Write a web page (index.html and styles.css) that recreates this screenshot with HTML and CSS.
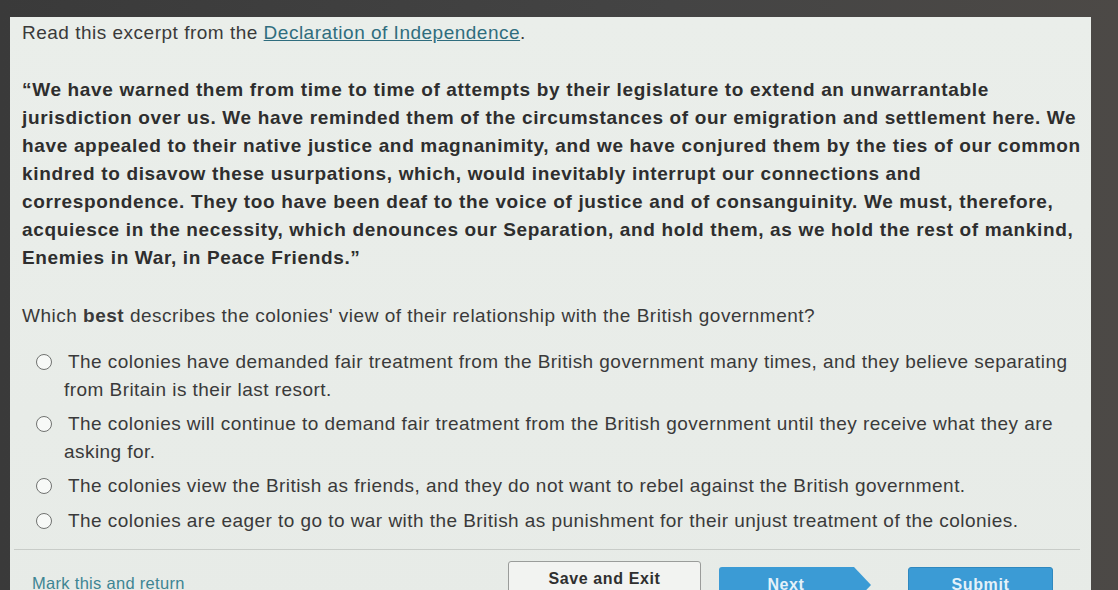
FILE: index.html
```html
<!DOCTYPE html>
<html>
<head>
<meta charset="utf-8">
<link rel="stylesheet" href="styles.css">
</head>
<body>
<div class="screen">
  <div class="content">
    <p class="intro">Read this excerpt from the <a class="link" href="#">Declaration of Independence</a>.</p>
    <p class="quote">“We have warned them from time to time of attempts by their legislature to extend an unwarrantable<br>jurisdiction over us. We have reminded them of the circumstances of our emigration and settlement here. We<br>have appealed to their native justice and magnanimity, and we have conjured them by the ties of our common<br>kindred to disavow these usurpations, which, would inevitably interrupt our connections and<br>correspondence. They too have been deaf to the voice of justice and of consanguinity. We must, therefore,<br>acquiesce in the necessity, which denounces our Separation, and hold them, as we hold the rest of mankind,<br>Enemies in War, in Peace Friends.”</p>
    <p class="question">Which <b>best</b> describes the colonies' view of their relationship with the British government?</p>
    <ul class="options">
      <li class="option"><span class="radio"></span><span class="otext">The colonies have demanded fair treatment from the British government many times, and they believe separating<br>from Britain is their last resort.</span></li>
      <li class="option"><span class="radio"></span><span class="otext">The colonies will continue to demand fair treatment from the British government until they receive what they are<br>asking for.</span></li>
      <li class="option"><span class="radio"></span><span class="otext">The colonies view the British as friends, and they do not want to rebel against the British government.</span></li>
      <li class="option"><span class="radio"></span><span class="otext">The colonies are eager to go to war with the British as punishment for their unjust treatment of the colonies.</span></li>
    </ul>
  </div>
  <div class="footer">
    <div class="markcell"><a class="mark" href="#">Mark this and return</a></div>
    <button class="btn save">Save and Exit</button>
    <button class="btn next">Next</button>
    <button class="btn submit">Submit</button>
  </div>
</div>
</body>
</html>
```

FILE: styles.css
```css
html, body {
  margin: 0;
  padding: 0;
  height: 100%;
  overflow: hidden;
}
body {
  background: linear-gradient(90deg, #3a3a3a 0%, #444444 60%, #4c4946 100%);
  font-family: "Liberation Sans", Arial, sans-serif;
  color: #333;
}
.screen {
  margin: 17px 0 0 10px;
  width: 1081px;
  height: 600px;
  background: linear-gradient(180deg, #eaeeea 0%, #e7ebe7 100%);
  display: flex;
  flex-direction: column;
}
.content {
  padding: 0 0 0 12px;
  white-space: nowrap;
}
.intro {
  margin: 4px 0 0;
  font-size: 19px;
  letter-spacing: 0.5px;
  line-height: 24px;
  color: #3a3a3a;
}
.link {
  color: #2f6d7e;
  text-decoration: underline;
}
.quote {
  margin: 31px 0 0;
  font-size: 19px;
  letter-spacing: 0.66px;
  font-weight: bold;
  line-height: 28px;
  color: #2e2e2e;
}
.question {
  margin: 32px 0 0;
  font-size: 19px;
  letter-spacing: 0.5px;
  line-height: 24px;
  color: #3a3a3a;
}
.options {
  list-style: none;
  margin: 20px 0 0;
  padding: 0 0 0 14px;
}
.option {
  display: flex;
  align-items: flex-start;
  font-size: 19px;
  letter-spacing: 0.45px;
  line-height: 27.5px;
  color: #3a3a3a;
  margin-bottom: 7px;
}
.option:last-child {
  margin-bottom: 0;
}
.radio {
  flex: none;
  box-sizing: border-box;
  width: 16px;
  height: 16px;
  border: 1.5px solid #707270;
  border-radius: 50%;
  background: #f7f9f7;
  margin: 6px 12px 0 0;
}
.otext {
  text-indent: 4px;
}
.footer {
  margin: 15px 0 0 4px;
  border-top: 1px solid #c8ccc8;
  width: 1066px;
  display: flex;
  align-items: flex-start;
  padding-top: 11px;
}
.markcell {
  flex: 0 0 476px;
  padding: 13px 0 0 18px;
}
.mark {
  font-size: 16.5px;
  letter-spacing: 0.3px;
  color: #3d8593;
  text-decoration: underline;
}
.btn {
  font-family: "Liberation Sans", Arial, sans-serif;
  font-size: 16px;
  letter-spacing: 0.6px;
  font-weight: bold;
  height: 36px;
  padding: 0;
  cursor: pointer;
}
.save {
  width: 193px;
  background: #f2f3f1;
  border: 1px solid #9a9c9a;
  border-radius: 3px;
  color: #2f2f2f;
}
.next {
  margin: 6px 0 0 18px;
  width: 152px;
  background: #3b9bd5;
  border: none;
  color: #e3f1f9;
  clip-path: polygon(0 0, calc(100% - 17px) 0, 100% 50%, calc(100% - 17px) 100%, 0 100%);
  border-radius: 3px 0 0 3px;
  padding-right: 18px;
}
.submit {
  margin: 6px 0 0 37px;
  width: 145px;
  background: #3b9bd5;
  border: 1px solid #2f88bf;
  border-radius: 3px;
  color: #e3f1f9;
}
```
